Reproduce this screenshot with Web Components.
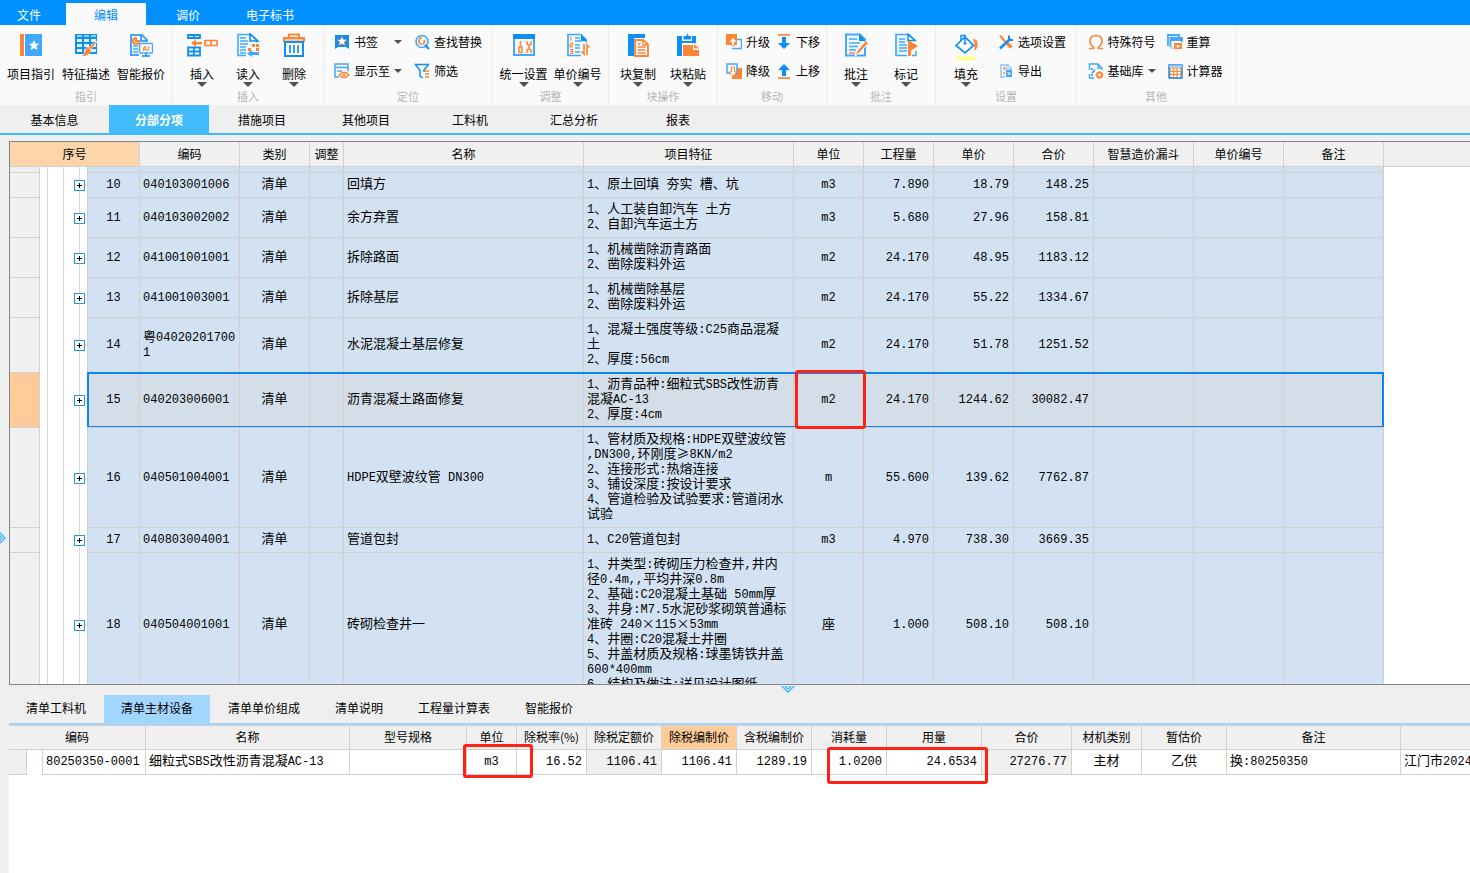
<!DOCTYPE html>
<html lang="zh-CN">
<head>
<meta charset="utf-8">
<title>工程计价 - 分部分项</title>
<style>
  html, body { margin: 0; height: 100%; }
  body { font: 12px/16px "Noto Sans CJK SC", "Liberation Sans", sans-serif; color: #000; background: #efefef; overflow: hidden; }
</style>
</head>
<body>
<cost-app>
  <tab-strip slot="menu" kind="menu">
    <tab-item kind="menu" first>文件</tab-item>
    <tab-item kind="menu" active>编辑</tab-item>
    <tab-item kind="menu">调价</tab-item>
    <tab-item kind="menu">电子标书</tab-item>
  </tab-strip>

  <ribbon-group slot="ribbon" label="指引" style="--w:173px">
    <tool-button icon="guide" style="--w:55px">项目指引</tool-button>
    <tool-button icon="feature" style="--w:55px">特征描述</tool-button>
    <tool-button icon="quote" style="--w:55px">智能报价</tool-button>
  </ribbon-group>
  <ribbon-group slot="ribbon" label="插入" style="--w:151px">
    <tool-button icon="insert" caret style="--w:46px">插入</tool-button>
    <tool-button icon="read" caret style="--w:46px">读入</tool-button>
    <tool-button icon="trash" caret style="--w:46px">删除</tool-button>
  </ribbon-group>
  <ribbon-group slot="ribbon" label="定位" style="--w:169px">
    <tool-stack style="--w:80px">
      <tool-button small icon="bookmark" caret>书签</tool-button>
      <tool-button small icon="goto" caret>显示至</tool-button>
    </tool-stack>
    <tool-stack style="--w:68px">
      <tool-button small icon="find">查找替换</tool-button>
      <tool-button small icon="filter">筛选</tool-button>
    </tool-stack>
  </ribbon-group>
  <ribbon-group slot="ribbon" label="调整" style="--w:116px">
    <tool-button icon="unify" caret style="--w:54px">统一设置</tool-button>
    <tool-button icon="numbers" caret style="--w:54px">单价编号</tool-button>
  </ribbon-group>
  <ribbon-group slot="ribbon" label="块操作" style="--w:109px">
    <tool-button icon="copy" caret style="--w:50px">块复制</tool-button>
    <tool-button icon="paste" caret style="--w:50px">块粘贴</tool-button>
  </ribbon-group>
  <ribbon-group slot="ribbon" label="移动" style="--w:109px">
    <tool-stack style="--w:50px">
      <tool-button small icon="promote">升级</tool-button>
      <tool-button small icon="demote">降级</tool-button>
    </tool-stack>
    <tool-stack style="--w:42px">
      <tool-button small icon="down">下移</tool-button>
      <tool-button small icon="up">上移</tool-button>
    </tool-stack>
  </ribbon-group>
  <ribbon-group slot="ribbon" label="批注" style="--w:109px">
    <tool-button icon="note" caret style="--w:50px">批注</tool-button>
    <tool-button icon="flag" caret style="--w:50px">标记</tool-button>
  </ribbon-group>
  <ribbon-group slot="ribbon" label="设置" style="--w:141px">
    <tool-button icon="fill" caret style="--w:50px">填充</tool-button>
    <tool-stack inset style="--w:80px">
      <tool-button small icon="options">选项设置</tool-button>
      <tool-button small icon="export">导出</tool-button>
    </tool-stack>
  </ribbon-group>
  <ribbon-group slot="ribbon" label="其他" style="--w:159px">
    <tool-stack style="--w:79px">
      <tool-button small icon="omega">特殊符号</tool-button>
      <tool-button small icon="base" caret>基础库</tool-button>
    </tool-stack>
    <tool-stack style="--w:58px">
      <tool-button small icon="recalc">重算</tool-button>
      <tool-button small icon="calc">计算器</tool-button>
    </tool-stack>
  </ribbon-group>

  <tab-strip slot="pages" kind="page">
    <tab-item kind="page" first>基本信息</tab-item>
    <tab-item kind="page" active>分部分项</tab-item>
    <tab-item kind="page">措施项目</tab-item>
    <tab-item kind="page">其他项目</tab-item>
    <tab-item kind="page">工料机</tab-item>
    <tab-item kind="page">汇总分析</tab-item>
    <tab-item kind="page">报表</tab-item>
  </tab-strip>

  <bill-grid slot="upper"></bill-grid>

  <tab-strip slot="detail-tabs" kind="detail">
    <tab-item kind="detail">清单工料机</tab-item>
    <tab-item kind="detail" active>清单主材设备</tab-item>
    <tab-item kind="detail">清单单价组成</tab-item>
    <tab-item kind="detail">清单说明</tab-item>
    <tab-item kind="detail">工程量计算表</tab-item>
    <tab-item kind="detail">智能报价</tab-item>
  </tab-strip>
  <material-grid slot="lower"></material-grid>
</cost-app>

<script>
const B = '#108ff2', L = '#42a8ff', O = '#ff8434';
const doc = `<path d="M2 1.5h14l5 5v16H2z" fill="#f3f9ff" stroke="${L}" stroke-width="2"/><path d="M15 1v7h7z" fill="${B}"/>`;
const ICONS = {
  guide: [24, 24, `<path d="M1 1h4v22H1z" fill="${O}"/><path d="M6 1h17v22H6z" fill="#3daaff"/><path d="M15 7l1.5 3.4 3.7.3-2.8 2.5.9 3.7-3.3-2-3.3 2 .9-3.7-2.8-2.5 3.700-.3z" fill="#fff"/>`],
  feature: [24, 24, `<path d="M1 1h22v20H1z" fill="${B}"/><path d="M3 6h5v3H3zM10 6h5v3h-5zM17 6h5v3h-5zM3 11h5v3H3zM10 11h5v3h-5zM17 11h5v3h-5zM3 16h5v3H3zM10 16h5v3h-5zM17 16h5v3h-5z" fill="#dff1ff"/><path d="M3 3h5M10 3h5M17 3h5" stroke="#9bd2ff" stroke-width="2"/><path d="M23.500 8l-6.500 8-2.500-2zM13.500 14l3.500 3q-1.500 6-9 6 3-2 3-4.500 0-3 2.500-4.500z" fill="${O}" stroke="#fafafa" stroke-width="1" paint-order="stroke"/>`],
  quote: [24, 24, `<path d="M10 22H2V2h11l5 5v2" fill="none" stroke="${L}" stroke-width="2"/><path d="M12 2v6h6" fill="none" stroke="${B}" stroke-width="1.500"/><path d="M7 5a3 3 0 1 0 3 3H7z" fill="none" stroke="${O}" stroke-width="2"/><path d="M4 13h5M4 16h5M4 19h5" stroke="${L}" stroke-width="1.500"/><rect x="10.500" y="10.500" width="13" height="9.500" rx="1" fill="#fff" stroke="${L}" stroke-width="1.500"/><path d="M13 23h8M17 20v3" stroke="${B}" stroke-width="1.500"/><text x="17" y="18" text-anchor="middle" font-family="Liberation Sans" font-weight="700" font-size="8" fill="${O}">AI</text>`],
  insert: [32, 24, `<path d="M2 2h12v3H2zM8 2v3M2 14.500h12v8H2zM8 14.500v8M2 18.500h12" fill="none" stroke="${B}" stroke-width="1.800"/><path d="M5 10l5-3.500V9h6v2.500h-6V14z" fill="${O}"/><path d="M19 7.500h12v5H19zM25 7.500v5" fill="none" stroke="${O}" stroke-width="1.700"/>`],
  read: [24, 24, `<path d="M10 22.500H2v-21h13l6 6v2" fill="#f3f9ff" stroke="${L}" stroke-width="1.600"/><path d="M14 1v7h8z" fill="none" stroke="${B}" stroke-width="1.600"/><path d="M4 5h6M4 8h8M4 11h8M4 14h6M4 17h6M4 20h6" stroke="${L}" stroke-width="1.500"/><path d="M16 11h3v3h-3zM20 11h3v3h-3zM20 15h3v3h-3zM12 15h3v3h-3z" fill="${O}"/><path d="M11 20.500l5-3.500v2h7v3h-7v2z" fill="${L}"/>`],
  trash: [24, 24, `<path d="M7 4V1.500h10V4" fill="none" stroke="${O}" stroke-width="2"/><path d="M1 4h22v5H1z" fill="${O}"/><path d="M3 6h18v2H3z" fill="#ffc39a"/><path d="M3 9h18v14H3z" fill="#fff" stroke="${B}" stroke-width="2"/><path d="M8 12v8M12 12v8M16 12v8" stroke="${B}" stroke-width="1.700"/>`],
  unify: [24, 24, `<path d="M2 2h20v20H2z" fill="#f5faff" stroke="${L}" stroke-width="2"/><path d="M1 1h22v5H1z" fill="${B}"/><path d="M8.500 8v6M7 14h3v5.500H7zM15 8v3l2 1.500 2-1.500V8M17 12v4M15 20v-3l2-1.500 2 1.500v3" fill="none" stroke="${O}" stroke-width="1.500"/>`],
  numbers: [24, 24, `<path d="M15 22.500H2v-21h13l5 5v3" fill="#f3f9ff" stroke="${L}" stroke-width="1.700"/><path d="M15 1v7h6z" fill="${B}"/><path d="M9 5h5M9 8h7M9 12h5M9 15h5M9 19h5" stroke="${L}" stroke-width="1.600"/><path d="M5 3.500v4M4 10h2.500v2H4v2h3M4 16.500h2.500v4H4M4 18.500h2" fill="none" stroke="${O}" stroke-width="1.200"/><path d="M18 11v10l-2.500-2.500M21 22V12l2.500 2.500" fill="none" stroke="${O}" stroke-width="1.700"/>`],
  copy: [24, 24, `<path d="M2 1h17v4H8v18H2z" fill="${B}"/><path d="M9 7h8.500l4.500 4.500V23H9z" fill="#fff" stroke="${O}" stroke-width="1.800"/><path d="M17 7v5h5M11.500 11h3M11.500 14h8M11.500 17h8M11.500 20h8" fill="none" stroke="${O}" stroke-width="1.400"/>`],
  paste: [24, 24, `<path d="M1 3h5v5h10V3h4v7H6v13H1z" fill="${B}"/><path d="M8 3h2.500q.5-2.500 1-2.500t1 2.500H15v3.500H7.500V3z" fill="${B}"/><path d="M7 12h10v5h6v6H7z" fill="${O}"/><path d="M18 11l5 4.500h-5z" fill="${O}"/>`],
  note: [24, 24, doc + `<path d="M5 6h8M5 10h11M5 13.500h9M5 17h7" stroke="${L}" stroke-width="1.600"/><path d="M11 23l2-5L22 7.500l2.500 2.500L15 20z" fill="${O}" stroke="#fff" stroke-width="1"/><path d="M5 20h6" stroke="${O}" stroke-width="1.500"/>`],
  flag: [24, 24, `<path d="M13 22.500H2v-21h13l6 6" fill="#f3f9ff" stroke="${L}" stroke-width="1.700"/><path d="M14 1.500v6h7z" fill="#fff" stroke="${B}" stroke-width="1.500"/><path d="M22 18v4.500h-4" fill="none" stroke="${L}" stroke-width="1.500"/><path d="M5 6h6M5 9h6M5 12h8M5 15h8M5 18h8" stroke="${L}" stroke-width="1.500"/><path d="M14 8h2l8 5-7 4.500V23h-3z" fill="${O}"/>`],
  fill: [24, 30, `<path d="M19 6q4 0 4.500 3v4q-1 4-3 4.500V11z" fill="${O}"/><path d="M2 12.500L11 4l8.500 8.500L11 20z" fill="#fff" stroke="${B}" stroke-width="1.700"/><path d="M7 8V2.500h4v9M9.500 10.500h3" fill="none" stroke="${B}" stroke-width="1.500"/><path d="M3 25.500h18" stroke="#ffff7a" stroke-width="3.500"/>`],
  bookmark: [16, 16, `<path d="M1 1h14v14l-3-2H4l-3 2z" fill="${B}"/><path d="M8 2.500l1.400 3.100 3.300.3-2.500 2.200.8 3.300L8 9.700l-3 1.700.8-3.300-2.500-2.200 3.300-.3z" fill="#fff" stroke="${O}" stroke-width=".6"/>`],
  goto: [16, 16, `<path d="M5 14H1V1h13v7" fill="none" stroke="${L}" stroke-width="1.500"/><path d="M1 4.500h13M3 8h5" stroke="${L}" stroke-width="1.500"/><path d="M5 12q5-5.500 10 0-5 5-10 0z" fill="#fff" stroke="${O}" stroke-width="1.300"/><circle cx="10" cy="12" r="1.500" fill="${O}"/>`],
  find: [16, 16, `<circle cx="8" cy="7.500" r="6" fill="none" stroke="${L}" stroke-width="1.700"/><path d="M11 11l4 4" stroke="${B}" stroke-width="2.200"/><path d="M8 3.500Q4.500 4 5 8q.5 2 3 2.500M10 6q1.500 2-1 4.500" fill="none" stroke="${O}" stroke-width="1.700"/>`],
  filter: [16, 16, `<path d="M10 9V7l4.500-5.500h-13L6 7.500V13l3 2" fill="none" stroke="${B}" stroke-width="1.500"/><path d="M11 8h4M11 11h4M11 14h4" stroke="${O}" stroke-width="1.300"/>`],
  promote: [16, 16, `<path d="M8 5.500h7.500v9H6" fill="none" stroke="${L}" stroke-width="1.500"/><path d="M0 0h11v11H0z" fill="${O}"/><path d="M7 3.500L11 8H8.500v4h-3V8H3z" fill="#fff" stroke="${O}" stroke-width=".7"/>`],
  demote: [16, 16, `<path d="M6 5h10v11H6z" fill="${O}"/><path d="M1 1h10v9H1z" fill="#f5faff" stroke="${L}" stroke-width="1.500"/><path d="M5.500 4h3v5H11l-4 4.500L3 9h2.500z" fill="#fff" stroke="${O}" stroke-width="1"/>`],
  down: [16, 16, `<path d="M2 1h12" stroke="${O}" stroke-width="1.700"/><path d="M6 3h4v6h4l-6 6-6-6h4z" fill="${B}"/>`],
  up: [16, 16, `<path d="M2 15h12" stroke="${O}" stroke-width="1.700"/><path d="M6 13V7H2l6-6 6 6h-4v6z" fill="${B}"/>`],
  options: [16, 16, `<path d="M1 2l2-1 5 6-1.500 1.500z" fill="${O}"/><path d="M9 9l4.500 4.500" stroke="${O}" stroke-width="3.500"/><path d="M2 14.500L12 5" stroke="${B}" stroke-width="2.500"/><path d="M11 1.500v3l1.500 1.500H15" fill="none" stroke="${B}" stroke-width="2"/>`],
  export: [16, 16, `<path d="M7 14H3V2h7l3 3v2" fill="none" stroke="#86c5ff" stroke-width="1.400"/><path d="M9 2v4h4" fill="none" stroke="#86c5ff"/><path d="M5 4h3v3H5zM5 9h2v2H5z" fill="#ffa876"/><path d="M8 7h6v7H8z" fill="${L}"/><path d="M9.500 9l3 3M12.500 9l-3 3" stroke="#fff"/>`],
  omega: [16, 16, `<path d="M1 14.500h4.500v-1.500Q2 11 2 7q0-5.500 6-5.500T14 7q0 4-3.500 6v1.500H15" fill="none" stroke="${O}" stroke-width="1.600"/>`],
  base: [16, 16, `<path d="M6 15H1.500v-4M1.500 7V1H10l4 4v2M10 1v4h4" fill="none" stroke="${L}" stroke-width="1.400"/><path d="M3 6h2M4 10l3-3M3 12h2" fill="none" stroke="${B}" stroke-width="1.300"/><circle cx="11.500" cy="12" r="2.300" fill="#fff" stroke="${O}" stroke-width="1.700"/><path d="M11.500 8v2M11.500 14v2M7.500 12h2M13.500 12h2M8.800 9.300l1.200 1.200M13 13.500l1.300 1.300M14.200 9.300L13 10.500M10 13.500l-1.200 1.300" stroke="${O}" stroke-width="1.300"/>`],
  recalc: [16, 16, `<path d="M1 12V1h11v2M3.500 13V4H15v4" fill="none" stroke="${L}" stroke-width="1.800"/><path d="M3 4h12v3H3z" fill="${L}"/><path d="M4 14h2" stroke="${L}"/><path d="M7 9h8v6H7z" fill="${O}"/><path d="M8.500 12h5M11 11v3" stroke="#fff"/>`],
  calc: [16, 16, `<path d="M3 5h11v10H3zM3 8.500h11M3 11.500h11M6.500 5v10M10 5v10" fill="none" stroke="${O}" stroke-width="1.200"/><path d="M2 2h13v13H2z" fill="none" stroke="${B}" stroke-width="1.500"/><path d="M2 2h13v2H2z" fill="#8fcbff"/>`]
};

function define(name, markup, setup) {
  const template = document.createElement('template');
  template.innerHTML = markup;
  customElements.define(name, class extends HTMLElement {
    constructor() {
      super();
      this.attachShadow({ mode: 'open' }).append(template.content.cloneNode(true));
    }
    connectedCallback() { if (setup) setup(this, this.shadowRoot); }
  });
}

define('cost-app', `
<style>
  :host { display: flex; flex-direction: column; height: 100vh; min-height: 480px; background: #efefef; }
  .ribbon { display: flex; flex: none; height: 80px; background: #fafafa; }
  .work { display: flex; flex: 1; min-height: 0; padding-top: 6px; }
  .rail { flex: 0 0 9px; padding-top: 389px; box-sizing: border-box; }
  .panes { display: flex; flex-direction: column; flex: 1; min-width: 0; }
  .lower { display: flex; flex-direction: column; flex: 0 0 188px; }
  .splitter { flex: none; height: 10px; padding-left: 771px; }
  svg { display: block; fill: none; }
</style>
<slot name="menu"></slot>
<div class="ribbon"><slot name="ribbon"></slot></div>
<slot name="pages"></slot>
<div class="work">
  <div class="rail"><svg width="8" height="16"><path d="M-1 0l8 8-8 8z" fill="#a9ddfb"/><path d="M-1 2l6 6-6 6M-1 5l3 3-3 3" stroke="#35aaf0" stroke-width="1"/></svg></div>
  <main class="panes">
    <slot name="upper"></slot>
    <section class="lower">
      <div class="splitter"><svg width="16" height="9"><path d="M0 1l8 8 8-8z" fill="#a9ddfb"/><path d="M2 1l6 6 6-6M5 1l3 3 3-3" stroke="#35aaf0"/></svg></div>
      <slot name="detail-tabs"></slot>
      <slot name="lower"></slot>
    </section>
  </main>
</div>`);

define('tab-strip', `
<style>
  :host { display: flex; flex: none; box-sizing: border-box; overflow: hidden; }
  :host([kind=menu]) { height: 25px; padding-top: 3px; gap: 2px; background: #0090ff; }
  :host([kind=page]) { height: 30px; border-bottom: 2px solid #41bbfb; }
  :host([kind=detail]) { height: 30px; gap: 1px; border-bottom: 2px solid #a3d6ff; }
</style><slot></slot>`, el => el.setAttribute('role', 'tablist'));

define('tab-item', `
<style>
  :host { display: flex; flex: none; }
  button { border: 0; background: none; color: inherit; font: inherit; padding: 0; width: 100%; height: 100%; }
  :host([kind=menu]) { width: 80px; color: #fff; }
  :host([kind=menu]) button { padding-top: 2px; }
  :host([kind=menu][first]) { width: 64px; }
  :host([kind=menu][first]) button { padding-right: 6px; }
  :host([kind=menu][active]) { background: #fafafa; color: #0090ff; }
  :host([kind=page]) { width: 104px; }
  :host([kind=page]) button { padding-top: 1px; }
  :host([kind=page][first]) { width: 109px; }
  :host([kind=page][active]) { width: 100px; margin-right: 1px; background: #41bbfb; color: #fff; font-weight: 700; }
  :host([kind=detail]) button { padding: 0 17px 2px; }
  :host([kind=detail][active]) { background: #a3d6ff; }
</style><button type="button" role="tab"><slot></slot></button>`, (el, root) =>
  root.querySelector('button').setAttribute('aria-selected', el.hasAttribute('active')));

define('ribbon-group', `
<style>
  :host { display: flex; flex-direction: column; flex: none; box-sizing: border-box; width: var(--w); border-right: 1px solid #ececec; }
  .tools { display: flex; flex: 1; justify-content: center; }
  .label { height: 17px; font-size: 11px; line-height: 16px; text-align: center; color: #b4b4b4; }
</style><div class="tools"><slot></slot></div><div class="label"></div>`, (el, root) =>
  root.querySelector('.label').textContent = el.getAttribute('label'));

define('tool-stack', `
<style>
  :host { display: flex; flex-direction: column; box-sizing: border-box; width: var(--w); padding-top: 2px; }
  :host([inset]) { padding-left: 7px; }
</style><slot></slot>`);

define('tool-button', `
<style>
  :host { display: block; width: var(--w); }
  button { display: flex; flex-direction: column; align-items: center; width: 100%; height: 100%; padding: 8px 0 0; border: 0; background: none; color: #000; font: inherit; white-space: nowrap; }
  .icon { flex: none; height: 33px; }
  .icon svg { display: block; }
  .caret { width: 0; height: 0; border: 5px solid transparent; border-top-color: #505050; border-bottom: 0; }
  :host(:not([caret])) .caret { display: none; }
  :host([small]) { width: auto; height: 29px; }
  :host([small]) button { flex-direction: row; padding: 0; gap: 4px; }
  :host([small]) .icon { height: 16px; }
  :host([small]) .caret { margin-left: auto; margin-right: 12px; border-width: 4px 4px 0; }
</style><button type="button"><span class="icon"></span><slot></slot><span class="caret"></span></button>`, (el, root) => {
  const [w, h, art] = ICONS[el.getAttribute('icon')];
  root.querySelector('.icon').innerHTML = `<svg width="${w}" height="${h}" viewBox="0 0 ${w} ${h}" fill="none" aria-hidden="true">${art}</svg>`;
});

const GRID_CSS = `
  table { width: 100%; table-layout: fixed; border-collapse: separate; border-spacing: 0; }
  th, td { box-sizing: border-box; padding: 0; border: solid #d0d0d0; border-width: 0 1px 1px 0; }
  th { height: var(--head); padding-bottom: 2px; background: #f0f0f0; font-weight: 400; line-height: 15px; white-space: nowrap; }
  th:last-child { border-right: 0; }
  td { position: relative; padding: 4px 3px 5px; font: 13px/15px "Liberation Mono", "Noto Sans CJK SC", monospace; white-space: pre; }
  td i { font: 12px/1px "Liberation Mono", monospace; }
  td b { font: 13px/1px "Noto Sans CJK SC", monospace; }
  .c { text-align: center; }
  .n { text-align: right; padding-right: 4px; }
  .g { background: #f0f0f0; }
  .mark { position: absolute; z-index: 2; box-sizing: border-box; border: 3px solid #ff2116; border-radius: 3px; pointer-events: none; }
`;
const escapeText = s => s.replace(/&/g, '&amp;').replace(/</g, '&lt;');
/* Latin runs get a smaller fixed-pitch size; × and ≥ keep the full width of the Chinese face. */
const rich = s => escapeText(s).replace(/[\x20-\x7e]+/g, '<i>$&</i>').replace(/[×≥]/g, '<b>$&</b>');
const cols = widths => '<colgroup>' + widths.map(w => `<col style="width:${w}px">`).join('') + '<col></colgroup>';

define('bill-grid', `
<style>${GRID_CSS}
  :host { --head: 25px; display: block; flex: 1; min-height: 0; overflow: hidden; background: #fff; border: solid #80868c; border-width: 1px 0 1px 1px; }
  .hot { background: #fcd5ab; }
  tbody td { background: #d3e2f3; }
  tbody td.gutter { background: #f0f0f0; }
  tbody td.rest { background: #fff; border: 0; }
  tbody td.tree { z-index: 1; padding: 0; border-bottom: 0; background: linear-gradient(#d8d8d8, #d8d8d8) 7px 0 / 1px 100% no-repeat, linear-gradient(#d8d8d8, #d8d8d8) 23px 0 / 1px 100% no-repeat, linear-gradient(#d8d8d8, #d8d8d8) 39px 0 / 1px 100% no-repeat, linear-gradient(#d8d8d8, #d8d8d8) 45px 50% / 2px 1px no-repeat, #fff; }
  button { display: block; box-sizing: border-box; width: 11px; height: 11px; margin-left: 34px; padding: 0; border: 1px solid #2498dc; background: linear-gradient(#000, #000) center / 5px 1px no-repeat, linear-gradient(#000, #000) center / 1px 5px no-repeat, #fff; }
  .peek td { height: 6px; padding: 0; }
  .sel td { background-color: #d4dee8; }
  .sel td.gutter { background: #ffcb99; }
  .frame { position: absolute; top: -1px; bottom: 1px; left: 47px; width: 1297px; box-sizing: border-box; border: 2px solid #0c84f4; border-bottom-width: 1px; pointer-events: none; }
</style>
<table><thead></thead><tbody></tbody></table>`, (el, root) => {
  const table = root.querySelector('table');
  table.insertAdjacentHTML('afterbegin', cols([30, 48, 52, 100, 70, 34, 240, 210, 70, 70, 80, 80, 100, 90, 100]));
  root.querySelector('thead').innerHTML = '<tr><th class="hot" colspan="3">序号</th>' +
    ['编码', '类别', '调整', '名称', '项目特征', '单位', '工程量', '单价', '合价', '智慧造价漏斗', '单价编号', '备注', '']
      .map(t => `<th>${t}</th>`).join('') + '</tr>';
  const rows = [
    ['10', '040103001006', '回填方', '1、原土回填 夯实 槽、坑', 'm3', '7.890', '18.79', '148.25'],
    ['11', '040103002002', '余方弃置', '1、人工装自卸汽车 土方\n2、自卸汽车运土方', 'm3', '5.680', '27.96', '158.81'],
    ['12', '041001001001', '拆除路面', '1、机械凿除沥青路面\n2、凿除废料外运', 'm2', '24.170', '48.95', '1183.12'],
    ['13', '041001003001', '拆除基层', '1、机械凿除基层\n2、凿除废料外运', 'm2', '24.170', '55.22', '1334.67'],
    ['14', '粤04020201700\n1', '水泥混凝土基层修复', '1、混凝土强度等级:C25商品混凝\n土\n2、厚度:56cm', 'm2', '24.170', '51.78', '1251.52'],
    ['15', '040203006001', '沥青混凝土路面修复', '1、沥青品种:细粒式SBS改性沥青\n混凝AC-13\n2、厚度:4cm', 'm2', '24.170', '1244.62', '30082.47'],
    ['16', '040501004001', 'HDPE双壁波纹管 DN300', '1、管材质及规格:HDPE双壁波纹管\n,DN300,环刚度≥8KN/m2\n2、连接形式:热熔连接\n3、铺设深度:按设计要求\n4、管道检验及试验要求:管道闭水\n试验', 'm', '55.600', '139.62', '7762.87'],
    ['17', '040803004001', '管道包封', '1、C20管道包封', 'm3', '4.970', '738.30', '3669.35'],
    ['18', '040504001001', '砖砌检查井一', '1、井类型:砖砌压力检查井,井内\n径0.4m,,平均井深0.8m\n2、基础:C20混凝土基础 50mm厚\n3、井身:M7.5水泥砂浆砌筑普通标\n准砖 240×115×53mm\n4、井圈:C20混凝土井圈\n5、井盖材质及规格:球墨铸铁井盖\n600*400mm\n6、结构及做法:详见设计图纸', '座', '1.000', '508.10', '508.10']
  ];
  const mark = '<span class="mark" style="inset:-3px -3px -2px 1px"></span>';
  root.querySelector('tbody').innerHTML =
    '<tr class="peek"><td class="gutter"></td><td class="tree" style="background-position-y:0,0,0,-9px"></td>' + '<td></td>'.repeat(13) + '<td class="rest"></td></tr>' +
    rows.map(([no, code, name, spec, unit, qty, price, sum]) => `<tr class="${no === '15' ? 'sel' : ''}"><td class="gutter"></td><td class="tree"${no === '15' ? ' style="background-color:#fff"' : ''}><button type="button" aria-label="展开 ${no}"></button>${no === '15' ? '<span class="frame"></span>' : ''}</td><td class="c">${rich(no)}</td><td>${rich(code)}</td><td class="c">清单</td><td></td><td>${rich(name)}</td><td>${rich(spec)}</td><td class="c">${rich(unit)}${no === '15' ? mark : ''}</td><td class="n">${rich(qty)}</td><td class="n">${rich(price)}</td><td class="n">${rich(sum)}</td><td></td><td></td><td></td><td class="rest" style="background-color:#fff"></td></tr>`).join('');
});

define('material-grid', `
<style>${GRID_CSS}
  :host { --head: 24px; display: block; flex: 1; min-height: 0; overflow-x: clip; background: #fff; border-top: 1px solid #d0d0d0; }
  .hot { background: #ffcb99; }
  .indent { border-bottom: 0; }
  td:last-child { overflow: hidden; border-right: 0; }
</style>
<table><thead></thead><tbody></tbody></table>`, (el, root) => {
  root.querySelector('table').insertAdjacentHTML('afterbegin', cols([18, 16, 103, 204, 117, 50, 70, 75, 75, 75, 75, 95, 90, 70, 85, 174]));
  root.querySelector('thead').innerHTML = '<tr><th colspan="3">编码</th>' +
    ['名称', '型号规格', '单位', '除税率(%)', '除税定额价', '除税编制价', '含税编制价', '消耗量', '用量', '合价', '材机类别', '暂估价', '备注', '']
      .map(t => `<th${t === '除税编制价' ? ' class="hot"' : ''}>${t}</th>`).join('') + '</tr>';
  const cells = [['g', ''], ['indent', ''], ['', '80250350-0001'], ['', '细粒式SBS改性沥青混凝AC-13'], ['', ''],
    ['c', 'm3', 'inset:-6px -17px -4px -4px'], ['n', '16.52'], ['n g', '1106.41'], ['n', '1106.41'], ['n', '1289.19'],
    ['n', '1.0200', 'left:15px;top:-3px;width:161px;height:37px'], ['n', '24.6534'], ['n g', '27276.77'],
    ['c', '主材'], ['c', '乙供'], ['', '换:80250350'], ['', '江门市2024']];
  root.querySelector('tbody').innerHTML = '<tr>' + cells.map(([cls, text, mark]) =>
    `<td class="${cls}">${rich(text)}${mark ? `<span class="mark" style="${mark}"></span>` : ''}</td>`).join('') + '</tr>';
});
</script>
</body>
</html>
